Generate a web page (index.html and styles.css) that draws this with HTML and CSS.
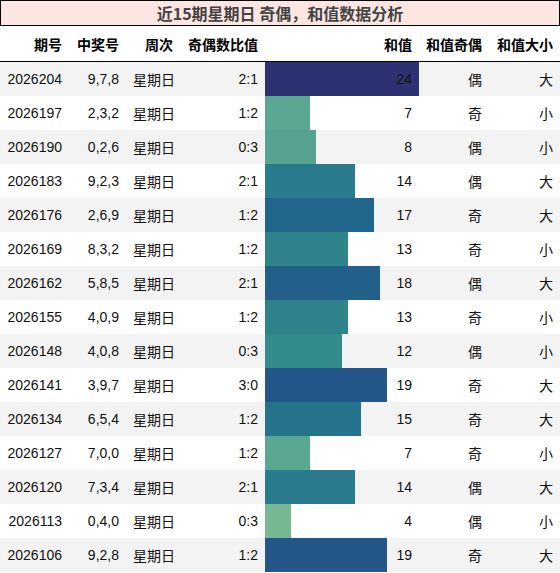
FILE: index.html
```html
<!DOCTYPE html>
<html lang="zh">
<head>
<meta charset="utf-8">
<title>近15期星期日 奇偶，和值数据分析</title>
<link rel="stylesheet" href="styles.css">
</head>
<body>
<div class="title">近15期星期日 奇偶，和值数据分析</div>
<table class="data">
<colgroup>
<col class="c1"><col class="c2"><col class="c3"><col class="c4"><col class="c5"><col class="c6"><col class="c7">
</colgroup>
<thead>
<tr><th>期号</th><th>中奖号</th><th>周次</th><th>奇偶数比值</th><th>和值</th><th>和值奇偶</th><th>和值大小</th></tr>
</thead>
<tbody>
<tr><td>2026204</td><td>9,7,8</td><td>星期日</td><td>2:1</td><td class="bar" style="--w:100%;--c:#2c3172">24</td><td>偶</td><td>大</td></tr>
<tr><td>2026197</td><td>2,3,2</td><td>星期日</td><td>1:2</td><td class="bar" style="--w:29.17%;--c:#5ba892">7</td><td>奇</td><td>小</td></tr>
<tr><td>2026190</td><td>0,2,6</td><td>星期日</td><td>0:3</td><td class="bar" style="--w:33.33%;--c:#56a18f">8</td><td>偶</td><td>小</td></tr>
<tr><td>2026183</td><td>9,2,3</td><td>星期日</td><td>2:1</td><td class="bar" style="--w:58.33%;--c:#2a7b8d">14</td><td>偶</td><td>大</td></tr>
<tr><td>2026176</td><td>2,6,9</td><td>星期日</td><td>1:2</td><td class="bar" style="--w:70.83%;--c:#21668b">17</td><td>奇</td><td>大</td></tr>
<tr><td>2026169</td><td>8,3,2</td><td>星期日</td><td>1:2</td><td class="bar" style="--w:54.17%;--c:#2f848c">13</td><td>奇</td><td>小</td></tr>
<tr><td>2026162</td><td>5,8,5</td><td>星期日</td><td>2:1</td><td class="bar" style="--w:75%;--c:#225f89">18</td><td>偶</td><td>大</td></tr>
<tr><td>2026155</td><td>4,0,9</td><td>星期日</td><td>1:2</td><td class="bar" style="--w:54.17%;--c:#2f848c">13</td><td>奇</td><td>小</td></tr>
<tr><td>2026148</td><td>4,0,8</td><td>星期日</td><td>0:3</td><td class="bar" style="--w:50%;--c:#348b8c">12</td><td>偶</td><td>小</td></tr>
<tr><td>2026141</td><td>3,9,7</td><td>星期日</td><td>3:0</td><td class="bar" style="--w:79.17%;--c:#24568a">19</td><td>奇</td><td>大</td></tr>
<tr><td>2026134</td><td>6,5,4</td><td>星期日</td><td>1:2</td><td class="bar" style="--w:62.5%;--c:#26738d">15</td><td>奇</td><td>大</td></tr>
<tr><td>2026127</td><td>7,0,0</td><td>星期日</td><td>1:2</td><td class="bar" style="--w:29.17%;--c:#5ba892">7</td><td>奇</td><td>小</td></tr>
<tr><td>2026120</td><td>7,3,4</td><td>星期日</td><td>2:1</td><td class="bar" style="--w:58.33%;--c:#2a7b8d">14</td><td>偶</td><td>大</td></tr>
<tr><td>2026113</td><td>0,4,0</td><td>星期日</td><td>0:3</td><td class="bar" style="--w:16.67%;--c:#77b892">4</td><td>偶</td><td>小</td></tr>
<tr><td>2026106</td><td>9,2,8</td><td>星期日</td><td>1:2</td><td class="bar" style="--w:79.17%;--c:#24568a">19</td><td>奇</td><td>大</td></tr>
</tbody>
</table>
</body>
</html>
```

FILE: styles.css
```css
html, body {
  margin: 0;
  padding: 0;
  background: #ffffff;
}

body {
  font-family: "Liberation Sans", "Noto Sans CJK SC", sans-serif;
  color: #111111;
  width: 560px;
}

.title {
  box-sizing: border-box;
  height: 26px;
  border: 1px solid #000000;
  background: #fde6e1;
  color: #444444;
  font-size: 16px;
  font-weight: bold;
  line-height: 24px;
  text-align: center;
  font-family: "Noto Sans CJK SC", "Liberation Sans", sans-serif;
}

.data {
  border-collapse: separate;
  border-spacing: 0;
  table-layout: fixed;
  width: 560px;
  font-size: 14px;
}

.c1 { width: 69px; }
.c2 { width: 57px; }
.c3 { width: 54px; }
.c4 { width: 85px; }
.c5 { width: 154px; }
.c6 { width: 70px; }
.c7 { width: 71px; }

.data th,
.data td {
  padding: 0 7px;
  text-align: right;
  white-space: nowrap;
  box-sizing: border-box;
}

.data th {
  height: 36px;
  padding-top: 1px;
  font-weight: bold;
  color: #000000;
  border-bottom: 1px solid #000000;
}

.data td {
  height: 34px;
}

.data tbody tr:nth-child(odd) {
  background: #f3f3f3;
}

.data tbody tr:nth-child(even) {
  background: #ffffff;
}

.data td.bar {
  background: linear-gradient(90deg, var(--c) 0, var(--c) var(--w), transparent var(--w), transparent 100%);
}
```
